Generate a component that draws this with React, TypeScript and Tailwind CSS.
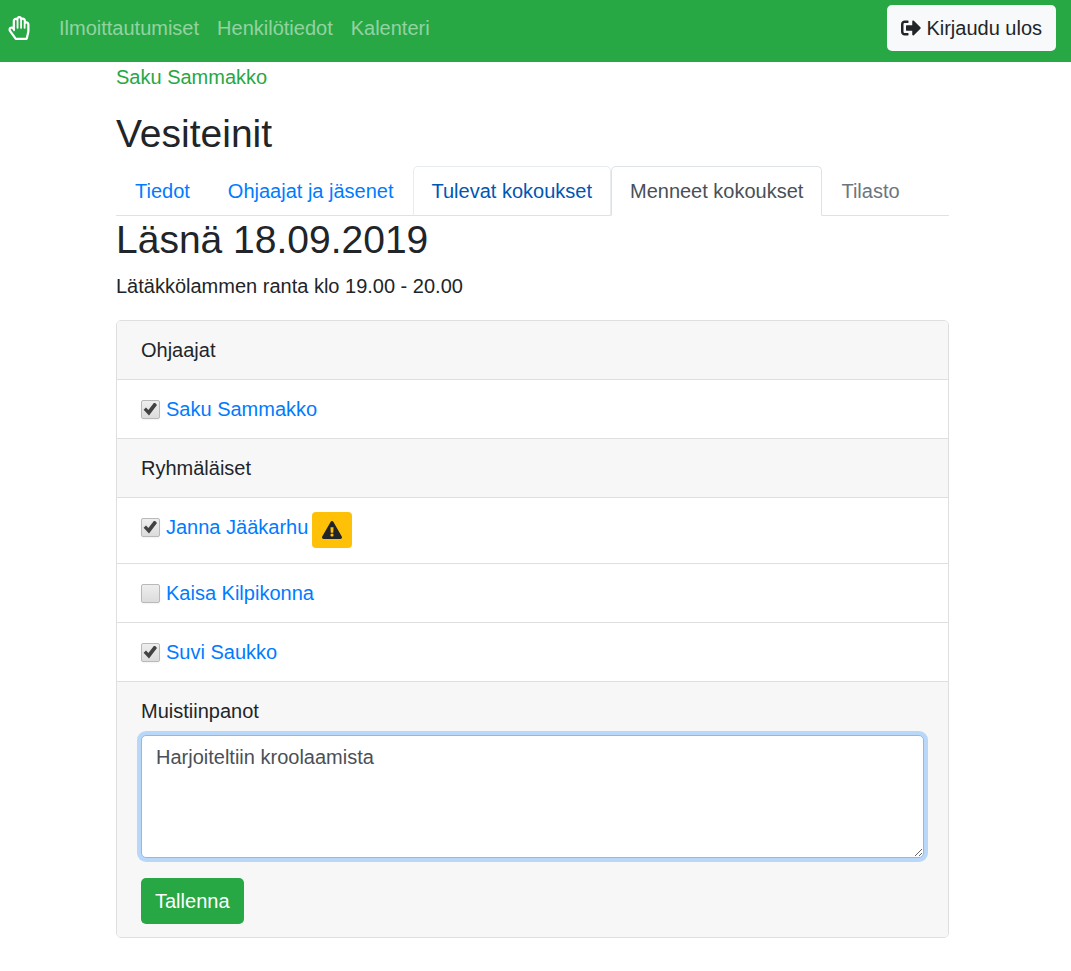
import { useState } from 'react';
import type { ReactNode } from 'react';
import { FaExclamationTriangle, FaRegHandPaper, FaSignOutAlt } from 'react-icons/fa';

const navLinks = ['Ilmoittautumiset', 'Henkilötiedot', 'Kalenteri'];

const tabBase = 'rounded-t-[5px] border px-[18px] py-[9px] -mb-px';
const tabs = [
  { label: 'Tiedot', style: 'border-transparent text-[#007bff]' },
  { label: 'Ohjaajat ja jäsenet', style: 'border-transparent text-[#007bff]' },
  { label: 'Tulevat kokoukset', style: 'border-[#e9ecef] border-b-[#dee2e6] text-[#0056b3]' },
  { label: 'Menneet kokoukset', style: 'border-[#dee2e6] border-b-white bg-white text-[#495057]', current: true },
  { label: 'Tilasto', style: 'border-transparent text-[#6c757d]' },
];

function SectionHeader({ children }: { children: ReactNode }) {
  return <h2 className="border-b border-[#dfdfdf] bg-[#f7f7f7] px-6 py-[14px]">{children}</h2>;
}

function AttendeeRow({ id, name, present, warning }: { id: string; name: string; present?: boolean; warning?: boolean }) {
  const [checked, setChecked] = useState(Boolean(present));
  return (
    <div className="flex items-start border-b border-[#dfdfdf] px-6 py-[14px]">
      <span className="mr-[6px] grid h-[30px] content-center">
        <input
          id={id}
          type="checkbox"
          aria-label={name}
          checked={checked}
          onChange={(e) => setChecked(e.target.checked)}
          className="col-start-1 row-start-1 size-[19px] appearance-none rounded-xs border border-[#b9b9b9] bg-linear-to-b from-[#eeeeee] to-[#dcdcdc] shadow-xs"
        />
        {checked && (
          <svg viewBox="0 0 19 19" className="pointer-events-none col-start-1 row-start-1 size-[19px]" aria-hidden="true">
            <path d="M2.6 9.8 5 7.6 7.4 10 12.8 3.1H14.2L16 5 8 15.6Z" fill="#424242" />
          </svg>
        )}
      </span>
      <a href="#" className="text-[#007bff]">{name}</a>
      {warning && (
        <button type="button" aria-label="Huomio" className="mb-px ml-1 flex h-9 w-10 items-center justify-center rounded-sm bg-[#ffc107]">
          <FaExclamationTriangle className="size-5" />
        </button>
      )}
    </div>
  );
}

export default function App() {
  const [notes, setNotes] = useState('Harjoiteltiin kroolaamista');
  return (
    <div className="font-['Liberation_Sans',Arial,sans-serif] text-[20px] leading-[30px] text-[#212529]">
      <header className="flex items-center bg-[#28a745] pt-[5px] pr-[15px] pb-[11px] pl-[7px]">
        <a href="#" aria-label="Etusivu" className="mr-7 text-white">
          <FaRegHandPaper className="size-6" />
        </a>
        <nav className="flex gap-[18px]">
          {navLinks.map((label) => (
            <a key={label} href="#" className="text-white/50">{label}</a>
          ))}
        </nav>
        <button type="button" className="ml-auto flex items-center gap-[5px] rounded-[5px] bg-[#f8f9fa] px-[14px] py-2">
          <FaSignOutAlt className="size-5" />
          Kirjaudu ulos
        </button>
      </header>

      <main className="mr-[122px] ml-[116px] pb-8">
        <a href="#" className="block text-[#28a745]">Saku Sammakko</a>
        <h1 className="mt-[18px] mb-[9px] text-[39px] leading-[47px]">Vesiteinit</h1>
        <nav className="flex border-b border-[#dee2e6]">
          {tabs.map((tab) => (
            <a key={tab.label} href="#" aria-current={tab.current ? 'page' : undefined} className={`${tabBase} ${tab.style}`}>
              {tab.label}
            </a>
          ))}
        </nav>
        <h1 className="mb-2 text-[39px] leading-[47px]">Läsnä 18.09.2019</h1>
        <p className="mb-[19px]">Lätäkkölammen ranta klo 19.00 - 20.00</p>

        <form className="overflow-hidden rounded-[5px] border border-[#dfdfdf]" onSubmit={(e) => e.preventDefault()}>
          <SectionHeader>Ohjaajat</SectionHeader>
          <AttendeeRow id="leader-saku" name="Saku Sammakko" present />
          <SectionHeader>Ryhmäläiset</SectionHeader>
          <AttendeeRow id="member-janna" name="Janna Jääkarhu" present warning />
          <AttendeeRow id="member-kaisa" name="Kaisa Kilpikonna" />
          <AttendeeRow id="member-suvi" name="Suvi Saukko" present />
          <div className="bg-[#f7f7f7] px-6 pt-[14px] pb-[13px]">
            <label htmlFor="notes" className="mb-[9px] block">Muistiinpanot</label>
            <textarea
              id="notes"
              value={notes}
              onChange={(e) => setNotes(e.target.value)}
              className="block h-[123px] w-full rounded-[5px] border border-[#80bdff] bg-white px-[14px] py-[6px] text-[#495057] ring-4 ring-[#007bff]/25 outline-none"
            />
            <button type="submit" className="mt-5 rounded-[5px] bg-[#28a745] px-[14px] py-2 text-white">Tallenna</button>
          </div>
        </form>
      </main>
    </div>
  );
}
